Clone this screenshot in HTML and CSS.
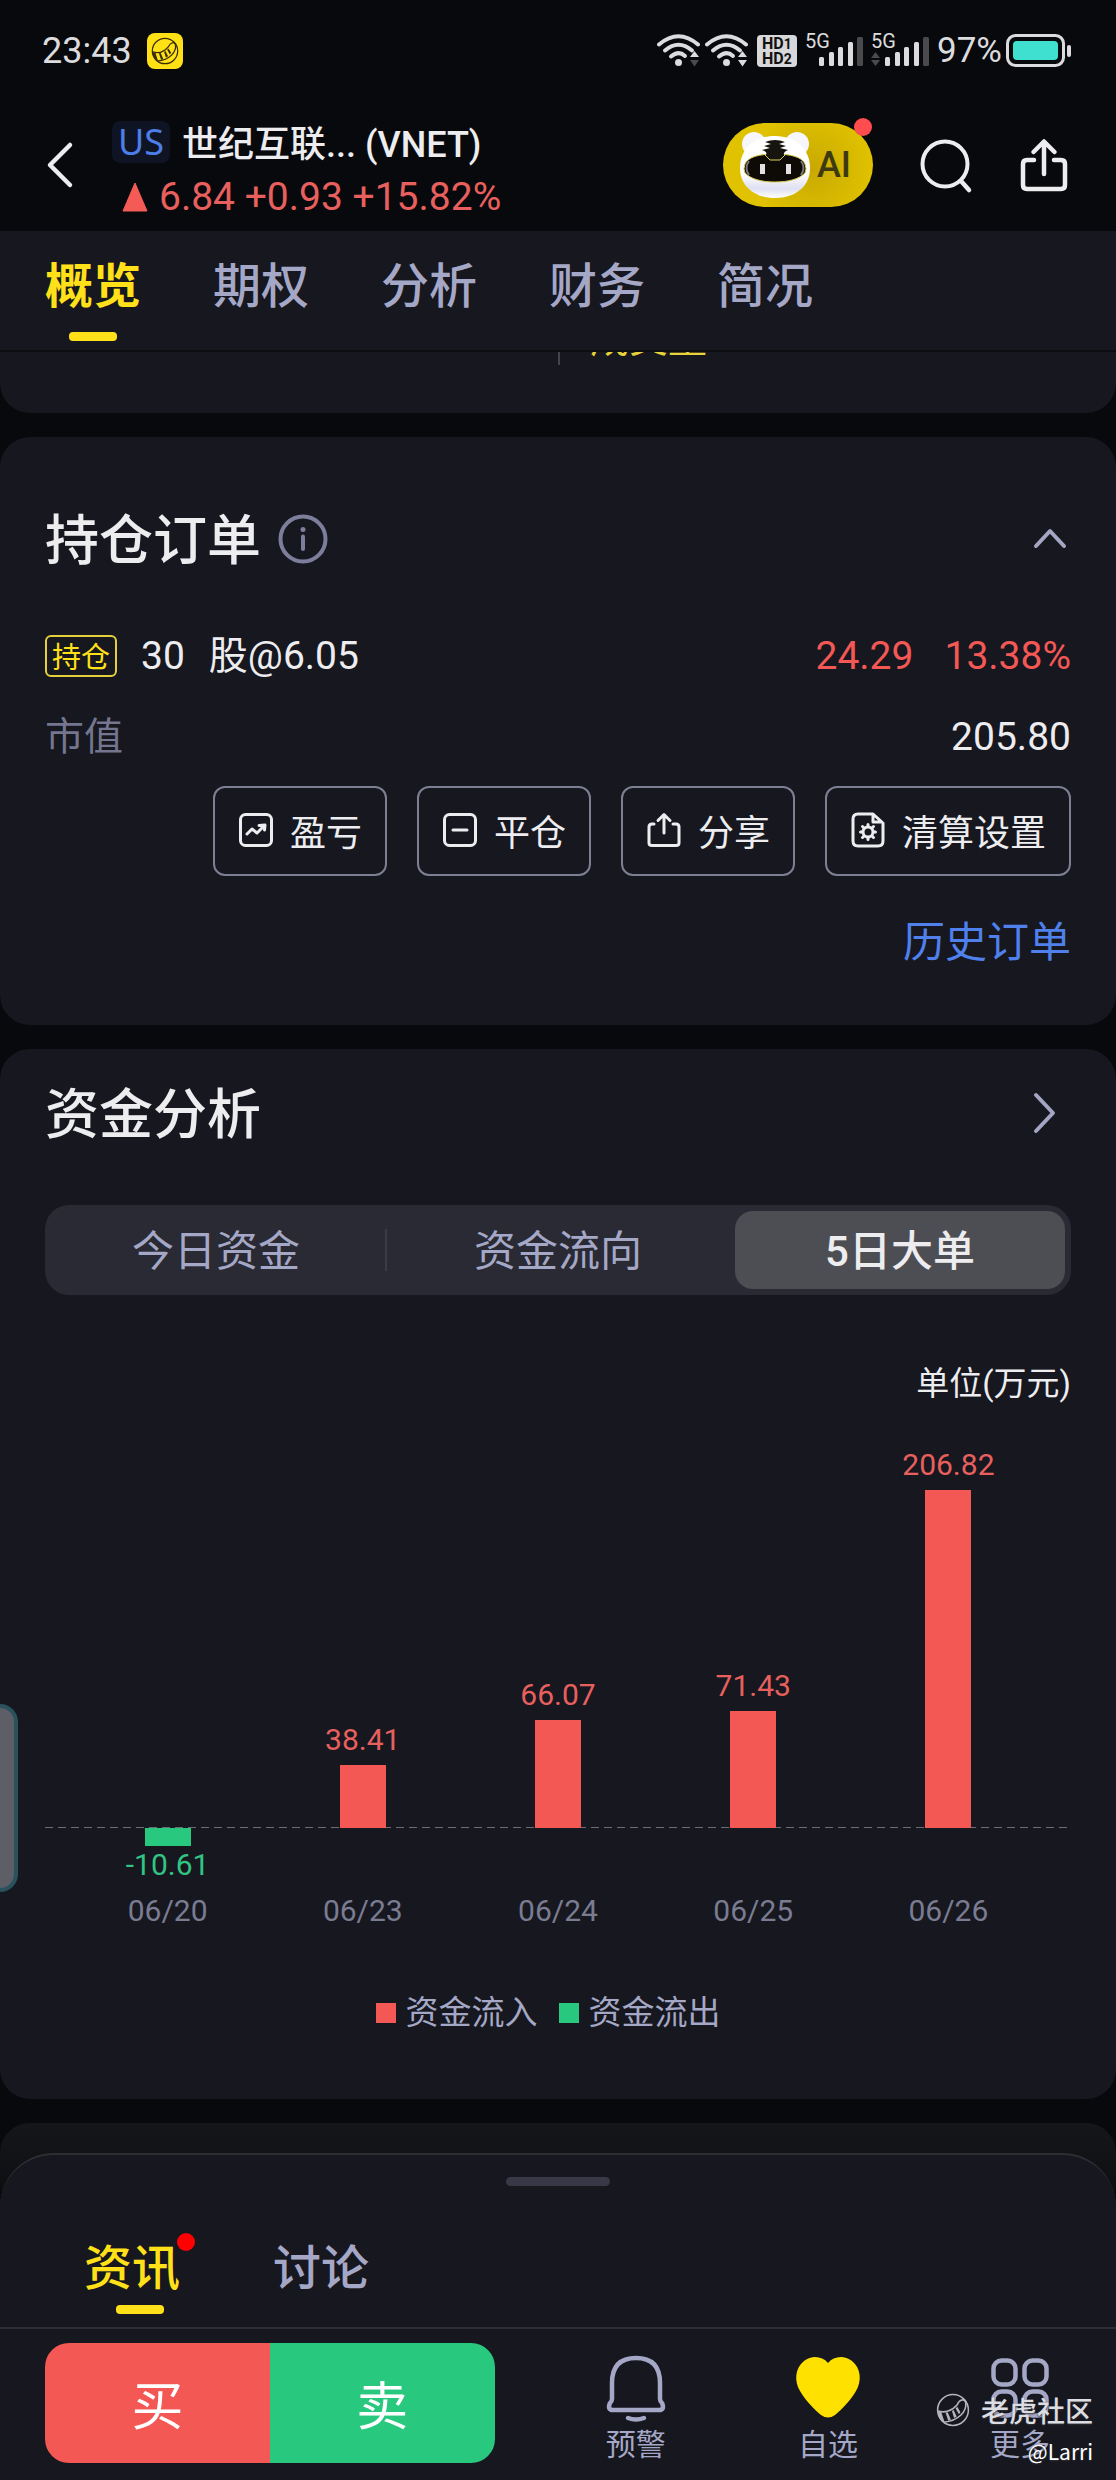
FILE: index.html
```html
<!DOCTYPE html>
<html lang="zh-CN">
<head>
<meta charset="utf-8">
<meta name="viewport" content="width=device-width, initial-scale=1">
<title>世纪互联 (VNET)</title>
<link rel="stylesheet" href="styles.css">
</head>
<body>
<svg class="defs" aria-hidden="true">
  <symbol id="tail" viewBox="0 0 32 32">
    <circle cx="16" cy="16" r="14.5" fill="none" stroke="currentColor" stroke-width="1.4"/>
    <path d="M2 17C8 19 15 17 20 11C22 6 27 5 28 9C29 17 22 26 7 27.500" fill="none" stroke="currentColor" stroke-width="1.500"/>
    <path d="M2 17.500L5 18L8 27L6 27Q2 23 2 17.500ZM9 18.500L11 18L14 25L11.500 26ZM15 17L16.500 16L19.500 22L17 23.500ZM20 13L23 18L21.500 20L18.500 14.500Z" fill="currentColor"/>
  </symbol>
  <symbol id="wifi" viewBox="0 0 44 36">
    <g fill="none" stroke="#dcdcde" stroke-width="4" stroke-linecap="round">
      <path d="M2 11.500Q21.500-5 41 11.500"/>
      <path d="M8 17.500Q21.500 6 35 17.500"/>
      <path d="M14 23.500Q21.500 17 28 23"/>
    </g>
    <circle cx="21.500" cy="29.500" r="3.500" fill="#dcdcde"/>
  </symbol>
  <symbol id="signal" viewBox="0 0 48 32">
    <g fill="#dcdcde">
      <rect x="4" y="22" width="5" height="9" rx="1.500"/>
      <rect x="14" y="17" width="5" height="14" rx="1.500"/>
      <rect x="23" y="12" width="5" height="19" rx="1.500"/>
      <rect x="33" y="7" width="5" height="24" rx="1.500"/>
    </g>
    <rect x="42" y="2" width="6" height="29" rx="1.500" fill="#4a4a4c"/>
  </symbol>
  <symbol id="share" viewBox="0 0 48 54">
    <path d="M14 22H7Q3 22 3 26V47Q3 51 7 51H41Q45 51 45 47V26Q45 22 41 22H34M24 36V4M13.500 14L24 3.500L34.500 14" fill="none" stroke="currentColor" stroke-width="4.500" stroke-linecap="round" stroke-linejoin="round"/>
  </symbol>
</svg>

<div class="app">
  <header class="top">
    <div class="status">
      <span class="clock">23:43</span>
      <span class="app-mark"><svg width="28" height="28"><use href="#tail"/></svg></span>
      <div class="status-right">
        <svg width="44" height="36" viewBox="0 0 44 36"><use href="#wifi"/><path d="M37.500 18L42 24H33Z" fill="#dcdcde"/><path d="M37.500 33.500L42 27H33Z" fill="#4a4a4c"/></svg>
        <svg width="44" height="36" viewBox="0 0 44 36"><use href="#wifi"/><path d="M37.500 18L42 24H33ZM37.500 33.500L42 27H33Z" fill="#dcdcde"/></svg>
        <svg class="hd" width="48" height="36" viewBox="0 0 48 36"><rect x="4" y="2" width="40" height="32" rx="4" fill="#d8d8da"/><text x="9" y="16">HD<tspan class="hd-no">1</tspan></text><text x="9" y="31">HD<tspan class="hd-no">2</tspan></text></svg>
        <svg class="cell" width="62" height="36" viewBox="0 0 62 36"><text x="0" y="15">5G</text><use href="#signal" x="10" y="2" width="48" height="32"/></svg>
        <svg class="cell" width="62" height="36" viewBox="0 0 62 36"><text x="0" y="15">5G</text><use href="#signal" x="10" y="2" width="48" height="32"/><path d="M4.500 19L9 25H0ZM4.500 33L9 27H0Z" fill="#4a4a4c"/></svg>
        <span class="percent">97%</span>
        <svg width="66" height="36" viewBox="0 0 66 36"><rect x="1.500" y="2.500" width="56" height="30" rx="8" fill="none" stroke="#dcdcde" stroke-width="3"/><rect x="7" y="8" width="45" height="19" rx="4" fill="#40e0d0"/><rect x="61" y="12" width="4" height="12" rx="2" fill="#dcdcde"/></svg>
      </div>
    </div>
    <div class="titlebar">
      <button class="icon-btn back" aria-label="返回"><svg width="30" height="48" viewBox="0 0 30 48"><path d="M25 4L5 24L25 44" fill="none" stroke="#ededf0" stroke-width="4.500" stroke-linecap="round" stroke-linejoin="round"/></svg></button>
      <div class="stock">
        <h1><span class="market">US</span><span>世纪互联<span class="dots">...</span> (VNET)</span></h1>
        <p class="quote"><svg width="26" height="30" viewBox="0 0 26 30"><path d="M13 1L25 29H1Z" fill="#f45b57" stroke="#f45b57" stroke-linejoin="round"/></svg>6.84 +0.93 +15.82%</p>
      </div>
      <button class="ai">
        <svg width="74" height="72" viewBox="0 0 74 72">
          <defs><linearGradient id="fur" x1="0" y1="0" x2="0" y2="1"><stop offset=".6" stop-color="#fff"/><stop offset=".85" stop-color="#dfe0f2"/><stop offset="1" stop-color="#fff"/></linearGradient></defs>
          <circle cx="15" cy="15" r="12" fill="#f6f6fb"/><circle cx="58" cy="15" r="12" fill="#f6f6fb"/>
          <path d="M36 7C58 7 71 21 71 39C71 57 57 69 36 69C15 69 1 57 1 39C1 21 14 7 36 7Z" fill="url(#fur)"/>
          <path d="M36 25C52 25 63 28 66 35Q68 40 66 44C60 50 50 53 36 53C22 53 12 50 6 44Q4 40 6 35C9 28 20 25 36 25Z" fill="#0e0b06" stroke="#d9cf52"/>
          <path d="M10 32Q5 39 10 46M62 32Q67 39 62 46" fill="none" stroke="#777" stroke-width="2"/>
          <path d="M26 13Q36 9 46 13L40 15L47 17L41 19L49 21Q44 23 45 26L41 31H31L27 26Q29 23 23 21L31 19L25 17L32 15Z" fill="#16140e"/>
          <path d="M25 25L31 31H41L47 25" fill="none" stroke="#d9cf52"/>
          <path d="M21 35h5v10h-5zM47 35h5v10h-5z" fill="#e2e2e6"/>
        </svg>
        <span>AI</span>
        <i class="dot"></i>
      </button>
      <button class="icon-btn" aria-label="搜索"><svg width="54" height="54" viewBox="0 0 54 54"><circle cx="26" cy="26" r="22.500" fill="none" stroke="#ededf0" stroke-width="4"/><path d="M42 43L50 52" stroke="#ededf0" stroke-width="4.500" stroke-linecap="round"/></svg></button>
      <button class="icon-btn" aria-label="分享"><svg width="48" height="54"><use href="#share"/></svg></button>
    </div>
    <nav class="tabs">
      <a class="tab on" href="#overview">概览</a>
      <a class="tab" href="#options">期权</a>
      <a class="tab" href="#analysis">分析</a>
      <a class="tab" href="#finance">财务</a>
      <a class="tab" href="#profile">简况</a>
    </nav>
  </header>

  <main class="cards">
    <section class="card volume"><div class="volume-cell">成交量</div></section>

    <section class="card orders">
      <div class="card-head">
        <h2>持仓订单</h2>
        <svg width="50" height="50" viewBox="0 0 50 50"><circle cx="25" cy="25" r="22.500" fill="none" stroke="#7c7e9c" stroke-width="4"/><circle cx="25" cy="15.500" r="2.500" fill="#7c7e9c"/><path d="M25 22.500V35" stroke="#7c7e9c" stroke-width="4" stroke-linecap="round"/></svg>
        <button class="icon-btn end" aria-label="收起"><svg width="42" height="30" viewBox="0 0 42 30"><path d="M7 22L21 7L35 22" fill="none" stroke="#a3a5c3" stroke-width="4" stroke-linecap="round" stroke-linejoin="round"/></svg></button>
      </div>
      <div class="row">
        <span class="badge">持仓</span><span class="qty">30</span><span>股@6.05</span>
        <span class="end up">24.29</span><span class="pct up">13.38%</span>
      </div>
      <div class="row value"><span class="muted">市值</span><span class="end">205.80</span></div>
      <div class="actions">
        <button><svg width="36" height="36" viewBox="0 0 36 36"><rect x="2.500" y="2.500" width="31" height="31" rx="5"/><path d="M9 22L14 17L19 21L26 14M21 13.500L27 13L26.500 18"/></svg>盈亏</button>
        <button><svg width="36" height="36" viewBox="0 0 36 36"><rect x="2.500" y="2.500" width="31" height="31" rx="5"/><path d="M11 18H25"/></svg>平仓</button>
        <button><svg width="36" height="36" viewBox="0 0 36 36"><path d="M8 12H6Q3 12 3 15V31Q3 33.500 6 33.500H30Q33 33.500 33 31V15Q33 12 30 12H27M18 21V3M12 8.500L18 2.500L24 8.500"/></svg>分享</button>
        <button><svg width="36" height="36" viewBox="0 0 36 36"><path d="M8 2H23L33 11V29Q33 34 28 34H8Q3 34 3 29V7Q3 2 8 2ZM23 3V10H32"/><circle cx="18" cy="20" r="5"/><path d="M18 12.500V14M18 26V27.500M10.500 20H12M24 20H25.500M12.500 14.500L14 16M22 24L23.500 25.500M12.500 25.500L14 24M22 16L23.500 14.500"/></svg>清算设置</button>
      </div>
      <a class="history" href="#history">历史订单</a>
    </section>

    <section class="card funds">
      <div class="card-head">
        <h2>资金分析</h2>
        <button class="icon-btn end" aria-label="查看资金分析"><svg width="54" height="42" viewBox="0 0 54 42"><path d="M19 3L36 21L19 39" fill="none" stroke="#a3a5c3" stroke-width="4" stroke-linecap="round" stroke-linejoin="round"/></svg></button>
      </div>
      <div class="segments">
        <button>今日资金</button><button>资金流向</button><button class="on">5日大单</button>
      </div>
      <p class="unit">单位(万元)</p>
      <div class="chart">
        <div class="col"><div class="above"></div><div class="below"><i class="bar" style="height:18px"></i><span>-10.61</span></div><span class="date">06/20</span></div>
        <div class="col"><div class="above"><span>38.41</span><i class="bar" style="height:63px"></i></div><div class="below"></div><span class="date">06/23</span></div>
        <div class="col"><div class="above"><span>66.07</span><i class="bar" style="height:108px"></i></div><div class="below"></div><span class="date">06/24</span></div>
        <div class="col"><div class="above"><span>71.43</span><i class="bar" style="height:117px"></i></div><div class="below"></div><span class="date">06/25</span></div>
        <div class="col"><div class="above"><span>206.82</span><i class="bar" style="height:338px"></i></div><div class="below"></div><span class="date">06/26</span></div>
      </div>
      <ul class="legend"><li class="in">资金流入</li><li class="out">资金流出</li></ul>
      <i class="side-handle"></i>
    </section>

    <section class="card peek"></section>
  </main>

  <section class="sheet">
    <i class="grip"></i>
    <nav class="sheet-tabs">
      <a class="tab on" href="#news">资讯<i class="dot"></i></a>
      <a class="tab" href="#talk">讨论</a>
    </nav>
  </section>

  <footer class="bottom">
    <div class="trade"><button class="buy">买</button><button class="sell">卖</button></div>
    <nav class="tools">
      <a href="#alert"><svg width="66" height="66" viewBox="0 0 66 66"><path d="M9 45V29Q9 4 33 4Q57 4 57 29V45Q57 47 59 49Q62 56 56 56H10Q4 56 7 49Q9 47 9 45ZM25 64Q33 67 41 64" fill="none" stroke="#a5a7c6" stroke-width="4.500" stroke-linecap="round" stroke-linejoin="round"/></svg>预警</a>
      <a href="#watchlist"><svg width="66" height="66" viewBox="0 0 66 66"><path d="M33 9C39 2 49 1 57 7C66 14 67 27 61 37C55 47 47 55 40 61Q33 66 26 61C19 55 11 47 5 37C-1 27 0 14 9 7C17 1 27 2 33 9Z" fill="#ffe100"/></svg>自选</a>
      <a href="#more"><svg width="66" height="66" viewBox="0 0 66 66" fill="none" stroke="#a5a7c6" stroke-width="4.500"><rect x="6.500" y="6.500" width="22" height="24" rx="8"/><rect x="37.500" y="6.500" width="22" height="24" rx="8"/><rect x="6.500" y="37.500" width="22" height="24" rx="8"/><rect x="37.500" y="37.500" width="22" height="24" rx="8"/></svg>更多</a>
    </nav>
    <div class="watermark">
      <div class="brand"><svg width="34" height="34"><use href="#tail"/></svg>老虎社区</div>
      <div class="author">@Larri</div>
    </div>
  </footer>
</div>
</body>
</html>
```

FILE: styles.css
```css
:root {
  --bg: #08090d;
  --card: #16171f;
  --text: #ededf0;
  --soft: #a5a7c6;
  --muted: #74768f;
  --red: #f45855;
  --green: #28c87e;
  --yellow: #ffe019;
  --gutter: 45px;
}

* { box-sizing: border-box; }

body {
  margin: 0;
  background: var(--bg);
  color: var(--text);
  font-family: Roboto, "Noto Sans CJK SC", sans-serif;
  font-size: 39px;
}

h1, h2, p, ul { margin: 0; padding: 0; }
h1, h2 { font-weight: 500; }
a { color: inherit; text-decoration: none; }
i { font-style: normal; }
svg { display: block; flex: none; overflow: visible; }
button {
  margin: 0;
  padding: 0;
  border: 0;
  background: none;
  color: inherit;
  font: inherit;
}
.defs { position: absolute; width: 0; height: 0; }
.end { margin-left: auto; }
.up { color: var(--red); }
.muted { color: var(--muted); }

.app { min-height: 100vh; display: flex; flex-direction: column; }

/* status bar */
.status {
  display: flex;
  align-items: center;
  height: 102px;
  padding: 0 44px 0 42px;
  color: #dcdcde;
}
.clock { font-size: 36px; line-height: 42px; }
.app-mark {
  display: flex;
  align-items: center;
  justify-content: center;
  width: 36px;
  height: 36px;
  margin-left: 15px;
  border-radius: 8px;
  background: #ffe116;
  color: #3a2c04;
}
.status-right { display: flex; align-items: center; gap: 4px; margin-left: auto; }
.hd text { font: 700 16px Roboto, sans-serif; fill: #111; }
.hd .hd-no { font-size: 14px; }
.cell text { font: 400 20px Roboto, sans-serif; fill: #dcdcde; }
.percent { font-size: 35px; line-height: 40px; }

/* title bar */
.titlebar {
  display: flex;
  align-items: center;
  height: 129px;
  padding: 0 48px 3px var(--gutter);
}
.stock { margin: 12px auto 0 37px; }
.stock h1 {
  display: flex;
  align-items: flex-start;
  gap: 12px;
  font-size: 36px;
  line-height: 48px;
}
.market {
  width: 58px;
  border-radius: 8px;
  background: #0f1424;
  color: #4d7ee8;
  font: 400 36px/42px "Noto Sans", sans-serif;
  text-align: center;
}
.quote {
  display: flex;
  align-items: center;
  gap: 11px;
  margin-top: 4px;
  padding-left: 10px;
  color: #e8605e;
  line-height: 48px;
}
.ai {
  position: relative;
  display: flex;
  align-items: center;
  gap: 4px;
  width: 150px;
  height: 84px;
  padding-left: 16px;
  border-radius: 42px;
  background: radial-gradient(circle at 60% 55%, #c9a900, #e0c200 60%);
  color: #3d3a12;
  font-size: 36px;
  font-weight: 500;
}
.dot {
  position: absolute;
  top: -5px;
  right: 1px;
  width: 18px;
  height: 18px;
  border-radius: 50%;
  background: #ff4d4f;
}
.icon-btn { display: flex; }
.ai + .icon-btn { margin: 0 47px 0 46px; }

/* tabs */
.tabs {
  display: flex;
  gap: 72px;
  height: 121px;
  padding: 0 var(--gutter);
  background: var(--card);
  border-bottom: 2px solid #0d0e12;
}
.tab {
  position: relative;
  display: flex;
  flex-direction: column;
  align-items: center;
  color: var(--soft);
  font-size: 48px;
  font-weight: 500;
  line-height: 60px;
}
.tabs .tab { padding-top: 26px; }
.tab.on { color: var(--yellow); }
.tabs .tab.on { font-weight: 700; }
.tab.on::after {
  content: "";
  width: 48px;
  height: 9px;
  margin-top: 15px;
  border-radius: 4px;
  background: var(--yellow);
}

/* cards */
.cards { display: flex; flex-direction: column; gap: 24px; }
.card { padding: 0 var(--gutter); border-radius: 30px; background: var(--card); }
.volume {
  display: flex;
  align-items: flex-end;
  justify-content: flex-end;
  height: 61px;
  padding: 0 0 48px;
  border-radius: 0 0 30px 30px;
  overflow: hidden;
}
.volume-cell {
  width: 50%;
  padding: 0 0 6px 30px;
  border-left: 2px solid #44454c;
  color: #e8d23a;
  line-height: 39px;
}
.card-head { display: flex; align-items: center; gap: 17px; }
.card-head h2 { padding-top: 6px; font-size: 54px; line-height: 66px; }
.row { display: flex; align-items: center; line-height: 48px; }

.orders { padding-top: 66px; padding-bottom: 58px; }
.orders .row { margin-top: 57px; }
.orders .row.value { margin-top: 33px; }
.badge {
  height: 42px;
  padding: 0 5px;
  border: 2px solid #e6cf3c;
  border-radius: 6px;
  color: var(--yellow);
  font-size: 29px;
  line-height: 42px;
}
.qty { margin: 0 24px; }
.pct { margin-left: 31px; }
.actions {
  display: flex;
  justify-content: flex-end;
  gap: 30px;
  margin-top: 25px;
}
.actions button {
  display: flex;
  align-items: center;
  gap: 16px;
  height: 90px;
  padding: 0 23px 2px;
  border: 2px solid #7d7f92;
  border-radius: 12px;
  font-size: 36px;
}
.actions svg {
  fill: none;
  stroke: var(--text);
  stroke-width: 3;
  stroke-linecap: round;
  stroke-linejoin: round;
}
.history {
  display: block;
  width: max-content;
  margin: 43px 0 0 auto;
  color: #4f80ec;
  font-size: 42px;
  line-height: 48px;
}

/* fund chart */
.funds { position: relative; padding-top: 28px; padding-bottom: 65px; }
.segments {
  display: grid;
  grid-template-columns: repeat(3, 1fr);
  height: 90px;
  margin-top: 56px;
  border-radius: 24px;
  background: #292a33;
}
.segments button { padding-bottom: 6px; color: var(--soft); font-size: 42px; }
.segments button:first-child {
  background: linear-gradient(#3a3b46, #3a3b46) right / 2px 42px no-repeat;
}
.segments .on {
  margin: 6px;
  border-radius: 18px;
  background: #4d4e54;
  color: var(--text);
  font-weight: 500;
}
.unit {
  margin-top: 68px;
  font-size: 33px;
  line-height: 42px;
  text-align: right;
}
.chart {
  display: grid;
  grid-template-columns: repeat(5, 1fr);
  margin-top: 30px;
  padding: 0 25px;
  background: repeating-linear-gradient(90deg, #6c6d75 0 8px, transparent 8px 13px) 0 392px / 100% 1px no-repeat;
  font-size: 30px;
  line-height: 36px;
}
.col, .above, .below { display: flex; flex-direction: column; align-items: center; }
.above { height: 393px; justify-content: flex-end; gap: 7px; color: #e8605e; }
.below { height: 65px; gap: 1px; color: #31c482; }
.bar { width: 46px; background: var(--red); }
.below .bar { background: var(--green); }
.date { color: #7a7c92; }
.legend {
  display: flex;
  justify-content: center;
  gap: 21px;
  margin-top: 63px;
  padding-right: 20px;
  color: var(--soft);
  font-size: 33px;
  line-height: 42px;
  list-style: none;
}
.legend li { display: flex; align-items: center; gap: 10px; }
.legend li::before { content: ""; width: 20px; height: 20px; background: var(--red); }
.legend .out::before { background: var(--green); }
.side-handle {
  position: absolute;
  left: 0;
  top: 655px;
  width: 18px;
  height: 188px;
  border: 4px solid #2a525c;
  border-left: 0;
  border-radius: 0 26px 26px 0;
  background: #5e5e67;
}
.peek { height: 90px; background: linear-gradient(#15161a, #0d0e11 80px); }

/* news sheet */
.sheet {
  display: flex;
  flex-direction: column;
  align-items: center;
  margin-top: -60px;
  padding-top: 22px;
  border-top: 2px solid #2d2e33;
  border-radius: 54px 54px 0 0;
  background: var(--card);
}
.grip { width: 104px; height: 9px; border-radius: 5px; background: #383847; }
.sheet-tabs {
  display: flex;
  align-self: stretch;
  gap: 93px;
  padding: 53px 84px 13px;
}
.sheet-tabs .tab.on::after { margin: 6px 0 0 15px; }
.sheet-tabs .dot { top: -6px; right: -15px; background: #ff0000; }

/* bottom bar */
.bottom {
  position: relative;
  display: flex;
  flex: 1;
  align-items: flex-start;
  padding: 14px 0 16px var(--gutter);
  border-top: 2px solid #2d2e33;
  background: var(--card);
}
.trade {
  display: flex;
  width: 42%;
  height: 120px;
  border-radius: 24px;
  overflow: hidden;
  color: #fff;
  font-size: 52px;
}
.trade button { flex: 1; padding-bottom: 2px; }
.buy { background: var(--red); }
.sell { background: var(--green); }
.tools {
  display: grid;
  grid-template-columns: repeat(3, 1fr);
  flex: 1;
  margin-left: 45px;
  padding-top: 11px;
}
.tools a {
  display: flex;
  flex-direction: column;
  align-items: center;
  gap: 7px;
  color: var(--soft);
  font-size: 30px;
  line-height: 36px;
}
.watermark {
  position: absolute;
  right: 23px;
  bottom: 14px;
  color: #dcdde2;
  font-family: "Noto Sans CJK SC", sans-serif;
  font-size: 28px;
  line-height: 32px;
  text-shadow: 0 1px 2px #333;
}
.brand { display: flex; align-items: center; gap: 11px; font-weight: 500; }
.brand svg { color: #b5b6bc; }
.author { margin-top: 9px; color: #fff; font-size: 21px; line-height: 30px; text-align: right; }
```
